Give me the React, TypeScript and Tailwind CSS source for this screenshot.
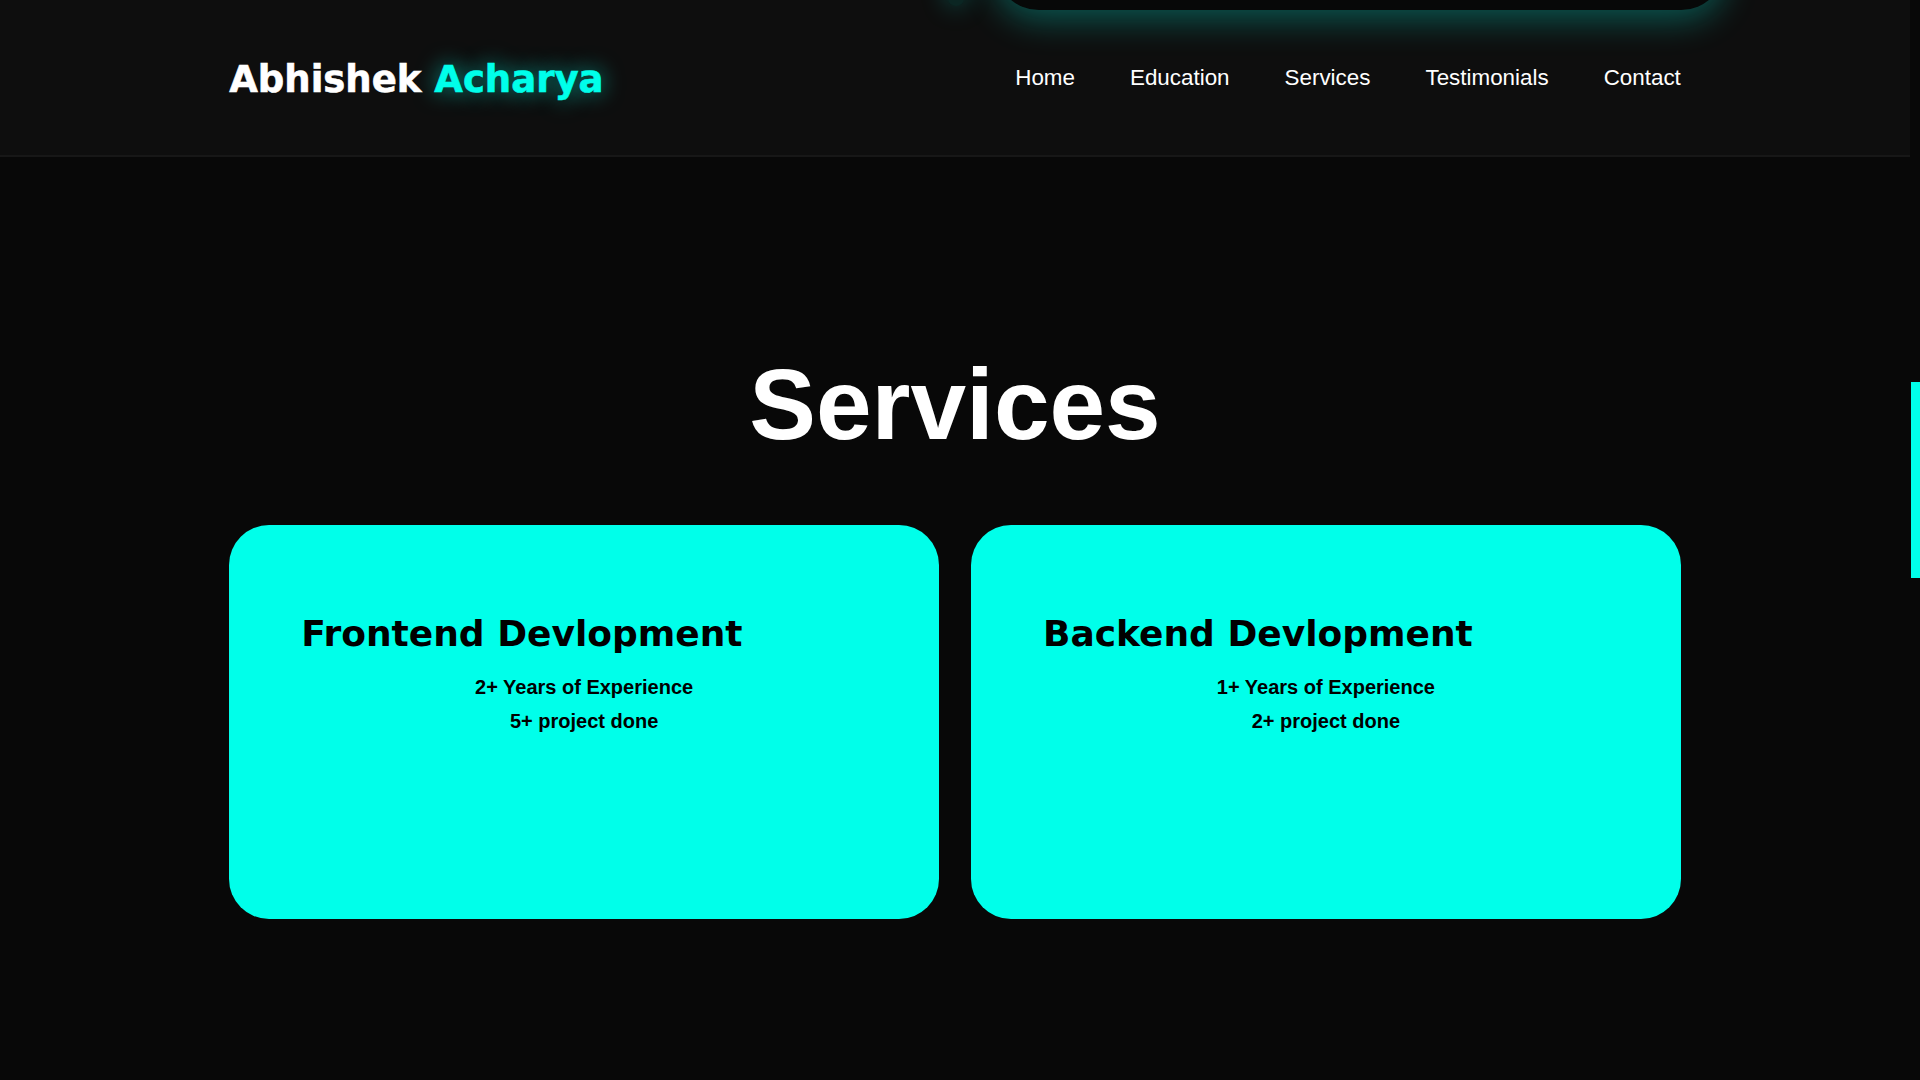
import React from "react";

const navLinks = ["Home", "Education", "Services", "Testimonials", "Contact"];

const services = [
  { title: "Frontend Devlopment", years: "2+ Years of Experience", projects: "5+ project done" },
  { title: "Backend Devlopment", years: "1+ Years of Experience", projects: "2+ project done" },
];

const heavy = { fontFamily: '"DejaVu Sans", "Liberation Sans", sans-serif' };

export default function App() {
  return (
    <div
      className="flex min-h-screen bg-[#080808]"
      style={{ fontFamily: '"Liberation Sans", Arial, sans-serif' }}>
      <div className="relative flex-1 overflow-hidden">
        {/* glowing menu panel hidden above the page */}
        <div className="absolute left-[995px] top-[-82px] w-[730px] h-[92px] rounded-[44px] bg-[#070808] shadow-[0_10px_34px_rgba(0,255,234,0.3)] z-10" />
        <div className="absolute left-[948px] top-[-34px] w-[16px] h-[40px] rounded-full bg-[#0b2623] shadow-[0_0_26px_rgba(0,255,234,0.34)] z-10" />

        {/* Header */}
        <header className="flex items-center justify-between h-[157px] px-[12%] bg-[#0e0e0e] border-b-2 border-[#171717]">
          <h1
            className="mt-[4px] text-[37px] font-bold text-white [-webkit-text-stroke:0.6px_currentColor]"
            style={heavy}>
            Abhishek{" "}
            <span className="text-[#00ffea] [text-shadow:0_0_22px_rgba(0,255,234,0.6)]">
              Acharya
            </span>
          </h1>
          <nav className="flex items-center gap-[55px]">
            {navLinks.map((link) => (
              <a key={link} href="#" className="text-[22.4px] text-white">
                {link}
              </a>
            ))}
          </nav>
        </header>

        {/* Services */}
        <section className="px-[12%] pt-[197px] pb-[160px]">
          <h2 className="text-center text-[100px] leading-none font-bold text-white">
            Services
          </h2>
          <div className="grid grid-cols-2 gap-[32px] mt-[71px]">
            {services.map((s) => (
              <div
                key={s.title}
                className="h-[394px] rounded-[40px] bg-[#00ffea] px-[72px] pt-[85px] text-black">
                <h3 className="text-[36px] leading-[48px] font-bold" style={heavy}>
                  {s.title}
                </h3>
                <div className="mt-[12px] text-center text-[20px] leading-[34px] font-bold">
                  <p>{s.years}</p>
                  <p>{s.projects}</p>
                </div>
              </div>
            ))}
          </div>
        </section>
      </div>

      {/* Scrollbar */}
      <div className="flex justify-end w-[10px] pt-[382px] bg-[#080808]">
        <div className="w-[9px] h-[196px] bg-[#00ffea]" />
      </div>
    </div>
  );
}
